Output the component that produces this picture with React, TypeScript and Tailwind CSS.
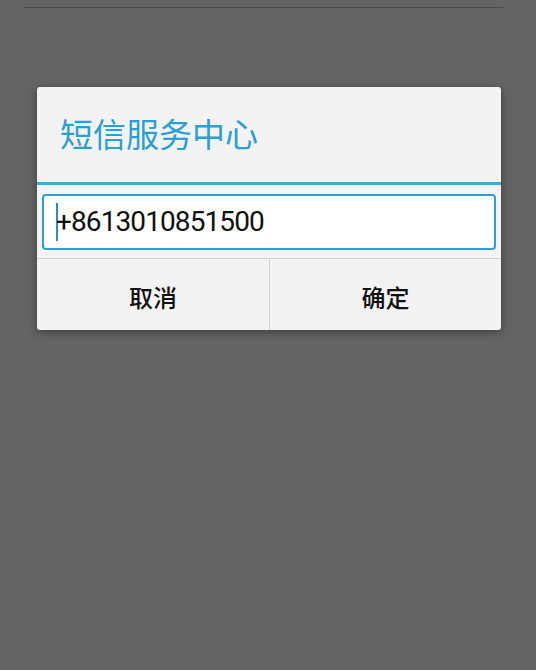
export default function App() {
  return (
    <div className="min-h-[670px] bg-[#646464] font-['Noto_Sans','Noto_Sans_CJK_SC',sans-serif]">
      {/* top divider of the screen behind the dialog */}
      <div className="pl-[23px] pr-[33px] pt-[7px]">
        <div className="h-px bg-[#4c4c4c]" />
      </div>

      <div className="ml-[37px] mt-[79px] w-[464px] overflow-hidden rounded-[3px] bg-[#f3f3f3] shadow-[0_2px_10px_rgba(0,0,0,0.4)]">
        {/* Title */}
        <div className="flex h-[95px] items-center pl-[23px] text-[33px] leading-none text-[#2b9fd1]">
          短信服务中心
        </div>
        <div className="h-[3px] bg-[#3aaedb]" />

        {/* Input */}
        <div className="px-[5px] pb-[8px] pt-[9px]">
          <div className="flex h-[56px] items-center rounded-[4px] border-2 border-[#2f9fcf] bg-white pl-[12px]">
            <span className="-mr-[2px] h-[38px] w-[2px] bg-[#2a8fc0]" />
            <span className="font-['Roboto','Noto_Sans',sans-serif] text-[28px] leading-none tracking-[-0.9px] text-[#111]">
              +8613010851500
            </span>
          </div>
        </div>
        <div className="h-px bg-[#d3d3d3]" />

        {/* Buttons */}
        <div className="flex h-[71px]">
          <button className="flex w-[232px] items-center justify-center pt-[6px] text-[24px] font-medium text-[#111]">
            取消
          </button>
          <div className="w-px bg-[#d3d3d3]" />
          <button className="flex flex-1 items-center justify-center pt-[6px] text-[24px] font-medium text-[#111]">
            确定
          </button>
        </div>
      </div>
    </div>
  )
}
